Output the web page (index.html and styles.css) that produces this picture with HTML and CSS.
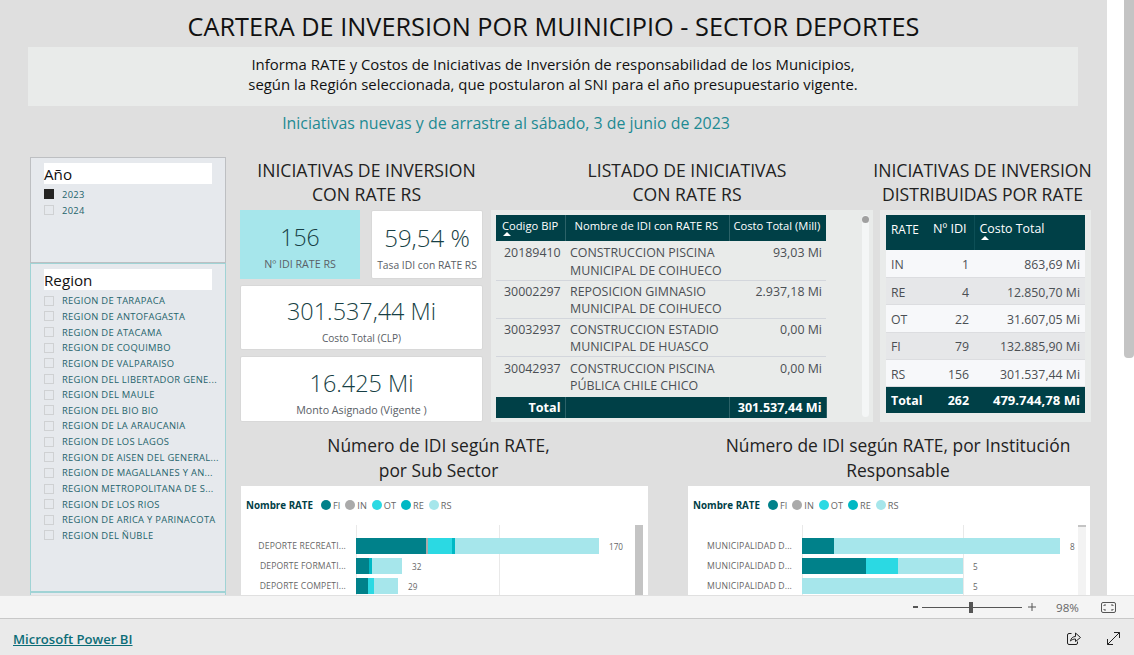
FILE: index.html
```html
<!DOCTYPE html>
<html lang="es">
<head>
    <meta charset="UTF-8">
    <title>Cartera de inversion por municipio</title>
    <link rel="stylesheet" href="styles.css">
</head>
<body>
    <div class="stage">
        <main class="canvas">
            <h1 class="page-title">CARTERA DE INVERSION POR MUINICIPIO - SECTOR DEPORTES</h1>
            <div class="info-box">
                Informa RATE y Costos de Iniciativas de Inversión de responsabilidad de los Municipios,<br>
                según la Región seleccionada, que postularon al SNI para el año presupuestario vigente.
            </div>
            <p class="subtitle">Iniciativas nuevas y de arrastre al sábado, 3 de junio de 2023</p>

            <div class="report">
                <!-- filtros -->
                <aside class="filters">
                    <section class="slicer slicer-year">
                        <h3 class="slicer-title">Año</h3>
                        <div class="slicer-item"><span class="check checked"></span>2023</div>
                        <div class="slicer-item"><span class="check"></span>2024</div>
                    </section>
                    <section class="slicer slicer-region">
                        <h3 class="slicer-title">Region</h3>
                        <div class="slicer-item"><span class="check"></span>REGION DE TARAPACA</div>
                        <div class="slicer-item"><span class="check"></span>REGION DE ANTOFAGASTA</div>
                        <div class="slicer-item"><span class="check"></span>REGION DE ATACAMA</div>
                        <div class="slicer-item"><span class="check"></span>REGION DE COQUIMBO</div>
                        <div class="slicer-item"><span class="check"></span>REGION DE VALPARAISO</div>
                        <div class="slicer-item"><span class="check"></span>REGION DEL LIBERTADOR GENE...</div>
                        <div class="slicer-item"><span class="check"></span>REGION DEL MAULE</div>
                        <div class="slicer-item"><span class="check"></span>REGION DEL BIO BIO</div>
                        <div class="slicer-item"><span class="check"></span>REGION DE LA ARAUCANIA</div>
                        <div class="slicer-item"><span class="check"></span>REGION DE LOS LAGOS</div>
                        <div class="slicer-item"><span class="check"></span>REGION DE AISEN DEL GENERAL...</div>
                        <div class="slicer-item"><span class="check"></span>REGION DE MAGALLANES Y AN...</div>
                        <div class="slicer-item"><span class="check"></span>REGION METROPOLITANA DE S...</div>
                        <div class="slicer-item"><span class="check"></span>REGION DE LOS RIOS</div>
                        <div class="slicer-item"><span class="check"></span>REGION DE ARICA Y PARINACOTA</div>
                        <div class="slicer-item"><span class="check"></span>REGION DEL ÑUBLE</div>
                    </section>
                    <section class="slicer slicer-next"></section>
                </aside>

                <div class="visuals">
                    <div class="top-row">
                        <!-- tarjetas -->
                        <section class="col-cards">
                            <h2 class="visual-title">INICIATIVAS DE INVERSION<br>CON RATE RS</h2>
                            <div class="cards">
                                <div class="card card-aqua card-small">
                                    <div class="card-value">156</div>
                                    <div class="card-label">Nº IDI RATE RS</div>
                                </div>
                                <div class="card card-small card-rate">
                                    <div class="card-value">59,54 %</div>
                                    <div class="card-label">Tasa IDI con RATE RS</div>
                                </div>
                                <div class="card card-wide card-cost">
                                    <div class="card-value">301.537,44 Mi</div>
                                    <div class="card-label">Costo Total (CLP)</div>
                                </div>
                                <div class="card card-wide card-amount">
                                    <div class="card-value">16.425 Mi</div>
                                    <div class="card-label">Monto Asignado (Vigente )</div>
                                </div>
                            </div>
                        </section>

                        <!-- listado -->
                        <section class="col-list">
                            <h2 class="visual-title">LISTADO DE INICIATIVAS<br>CON RATE RS</h2>
                            <div class="list-panel">
                                <table class="data-table list-table">
                                    <thead>
                                        <tr>
                                            <th class="col-bip">Codigo BIP<span class="sort-arrow"></span></th>
                                            <th class="col-name">Nombre de IDI con RATE RS</th>
                                            <th class="col-cost">Costo Total (Mill)</th>
                                        </tr>
                                    </thead>
                                    <tbody>
                                        <tr>
                                            <td>20189410</td>
                                            <td class="name-cell">CONSTRUCCION PISCINA MUNICIPAL DE COIHUECO</td>
                                            <td class="num">93,03 Mi</td>
                                        </tr>
                                        <tr>
                                            <td>30002297</td>
                                            <td class="name-cell">REPOSICION GIMNASIO MUNICIPAL DE COIHUECO</td>
                                            <td class="num">2.937,18 Mi</td>
                                        </tr>
                                        <tr>
                                            <td>30032937</td>
                                            <td class="name-cell">CONSTRUCCION ESTADIO MUNICIPAL DE HUASCO</td>
                                            <td class="num">0,00 Mi</td>
                                        </tr>
                                        <tr>
                                            <td>30042937</td>
                                            <td class="name-cell">CONSTRUCCION PISCINA PÚBLICA CHILE CHICO</td>
                                            <td class="num">0,00 Mi</td>
                                        </tr>
                                    </tbody>
                                    <tfoot>
                                        <tr>
                                            <td class="num">Total</td>
                                            <td></td>
                                            <td class="num">301.537,44 Mi</td>
                                        </tr>
                                    </tfoot>
                                </table>
                                <div class="list-scroll"><span class="list-thumb"></span></div>
                            </div>
                        </section>

                        <!-- distribucion -->
                        <section class="col-dist">
                            <h2 class="visual-title">INICIATIVAS DE INVERSION<br>DISTRIBUIDAS POR RATE</h2>
                            <div class="dist-panel">
                                <table class="data-table dist-table">
                                    <thead>
                                        <tr>
                                            <th class="col-rate">RATE</th>
                                            <th class="col-idi">Nº IDI</th>
                                            <th class="col-total">Costo Total<span class="sort-arrow"></span></th>
                                        </tr>
                                    </thead>
                                    <tbody>
                                        <tr><td>IN</td><td class="num">1</td><td class="num">863,69 Mi</td></tr>
                                        <tr><td>RE</td><td class="num">4</td><td class="num">12.850,70 Mi</td></tr>
                                        <tr><td>OT</td><td class="num">22</td><td class="num">31.607,05 Mi</td></tr>
                                        <tr><td>FI</td><td class="num">79</td><td class="num">132.885,90 Mi</td></tr>
                                        <tr><td>RS</td><td class="num">156</td><td class="num">301.537,44 Mi</td></tr>
                                    </tbody>
                                    <tfoot>
                                        <tr><td>Total</td><td class="num">262</td><td class="num">479.744,78 Mi</td></tr>
                                    </tfoot>
                                </table>
                            </div>
                        </section>
                    </div>

                    <div class="bottom-row">
                        <section class="col-chart chart-sector">
                            <h2 class="visual-title">Número de IDI según RATE,<br>por Sub Sector</h2>
                            <div class="chart">
                                <div class="legend">
                                    <strong>Nombre RATE</strong>
                                    <span class="legend-item"><i class="dot fi"></i>FI</span>
                                    <span class="legend-item"><i class="dot in"></i>IN</span>
                                    <span class="legend-item"><i class="dot ot"></i>OT</span>
                                    <span class="legend-item"><i class="dot re"></i>RE</span>
                                    <span class="legend-item"><i class="dot rs"></i>RS</span>
                                </div>
                                <div class="plot plot-sector">
                                    <div class="bar-row">
                                        <span class="bar-label">DEPORTE RECREATI...</span>
                                        <div class="bar">
                                            <i class="fi" style="width:70px"></i><i class="in" style="width:2px"></i><i class="ot" style="width:24px"></i><i class="re" style="width:3px"></i><i class="rs" style="width:144px"></i>
                                        </div>
                                        <span class="bar-value">170</span>
                                    </div>
                                    <div class="bar-row">
                                        <span class="bar-label">DEPORTE FORMATI...</span>
                                        <div class="bar">
                                            <i class="fi" style="width:13px"></i><i class="re" style="width:3px"></i><i class="rs" style="width:30px"></i>
                                        </div>
                                        <span class="bar-value">32</span>
                                    </div>
                                    <div class="bar-row">
                                        <span class="bar-label">DEPORTE COMPETI...</span>
                                        <div class="bar">
                                            <i class="fi" style="width:12px"></i><i class="ot" style="width:6px"></i><i class="rs" style="width:24px"></i>
                                        </div>
                                        <span class="bar-value">29</span>
                                    </div>
                                    <div class="plot-scroll thumb-full"></div>
                                </div>
                            </div>
                        </section>
                        <section class="col-chart chart-inst">
                            <h2 class="visual-title">Número de IDI según RATE, por Institución<br>Responsable</h2>
                            <div class="chart">
                                <div class="legend">
                                    <strong>Nombre RATE</strong>
                                    <span class="legend-item"><i class="dot fi"></i>FI</span>
                                    <span class="legend-item"><i class="dot in"></i>IN</span>
                                    <span class="legend-item"><i class="dot ot"></i>OT</span>
                                    <span class="legend-item"><i class="dot re"></i>RE</span>
                                    <span class="legend-item"><i class="dot rs"></i>RS</span>
                                </div>
                                <div class="plot plot-inst">
                                    <div class="bar-row">
                                        <span class="bar-label">MUNICIPALIDAD D...</span>
                                        <div class="bar">
                                            <i class="fi" style="width:32px"></i><i class="rs" style="width:226px"></i>
                                        </div>
                                        <span class="bar-value">8</span>
                                    </div>
                                    <div class="bar-row">
                                        <span class="bar-label">MUNICIPALIDAD D...</span>
                                        <div class="bar">
                                            <i class="fi" style="width:64px"></i><i class="ot" style="width:32px"></i><i class="rs" style="width:65px"></i>
                                        </div>
                                        <span class="bar-value">5</span>
                                    </div>
                                    <div class="bar-row">
                                        <span class="bar-label">MUNICIPALIDAD D...</span>
                                        <div class="bar">
                                            <i class="rs" style="width:161px"></i>
                                        </div>
                                        <span class="bar-value">5</span>
                                    </div>
                                    <div class="plot-scroll thumb-top"></div>
                                </div>
                            </div>
                        </section>
                    </div>
                </div>
            </div>
        </main>
        <div class="page-scroll"><span class="page-thumb"></span></div>
    </div>

    <!-- barra de zoom -->
    <div class="zoom-bar">
        <svg class="zoom-minus" width="5" height="2" viewBox="0 0 5 2"><rect width="5" height="2" fill="#555"/></svg>
        <span class="zoom-slider"><span class="zoom-handle"></span></span>
        <svg width="8" height="8" viewBox="0 0 8 8" fill="none" stroke="#555"><path d="M0 4H8M4 0V8"/></svg>
        <span class="zoom-value">98%</span>
        <svg class="fit-icon" width="15" height="11" viewBox="0 0 15 11" fill="none" stroke="#555">
            <rect x="0.5" y="0.5" width="14" height="10" rx="1.5"/>
            <path d="M3 4V3H5M10 3H12V4M12 7V8H10M5 8H3V7"/>
        </svg>
    </div>

    <footer class="footer">
        <a class="pbi-link" href="#">Microsoft Power BI</a>
        <div class="footer-icons">
            <svg width="14" height="13" viewBox="0 0 14 13" fill="none" stroke="#222">
                <path d="M4.5 1.5H2A1.5 1.5 0 0 0 .5 3V11A1.5 1.5 0 0 0 2 12.5H9A1.5 1.5 0 0 0 10.500 11V9.500"/>
                <path d="M3.500 9C4 6 6 4.500 8.500 4.500V1L13.500 5.500L8.500 9.500V7C6.500 7 5 7.500 3.500 9Z"/>
            </svg>
            <svg width="13" height="13" viewBox="0 0 13 13" fill="none" stroke="#222">
                <path d="M.5 12.500L12.500 .5M7 .5H12.500V6M.5 7V12.500H6"/>
            </svg>
        </div>
    </footer>
</body>
</html>
```

FILE: styles.css
```css
* {
    box-sizing: border-box;
}

html, body {
    margin: 0;
    padding: 0;
    height: 100%;
    overflow: hidden;
}

body {
    font-family: "Open Sans", "Noto Sans", Arial, sans-serif;
    color: #111;
    background-color: #eaeaea;
    display: flex;
    flex-direction: column;
}

.stage {
    display: flex;
    height: 595px;
    overflow: hidden;
    background-color: white;
}

.canvas {
    width: 1107px;
    flex-shrink: 0;
    background-color: #dfdfdf;
    padding-top: 11px;
}

.page-scroll {
    flex-grow: 1;
    padding-left: 17px;
}

.page-thumb {
    display: block;
    width: 10px;
    height: 358px;
    background-color: #c4c4c4;
    border-radius: 0 0 4px 4px;
}

/* cabecera */
.page-title {
    margin: 0;
    font-size: 25.3px;
    line-height: 30px;
    font-weight: 400;
    text-align: center;
}

.info-box {
    margin: 6px 29px 0 28px;
    height: 59px;
    padding-top: 7px;
    background-color: #e9ebea;
    text-align: center;
    font-size: 14.9px;
    line-height: 20px;
}

.subtitle {
    margin: 7px 0 0 -95px;
    font-size: 15.9px;
    line-height: 20px;
    color: #1d8a93;
    text-align: center;
}

.report {
    display: flex;
    margin: 24px 0 0 30px;
}

/* filtros */
.filters {
    width: 196px;
    flex-shrink: 0;
    margin-right: 14px;
}

.slicer {
    background-color: #e6e9ed;
    border: 1px solid #bdbfc2;
    padding: 5px 13px 0;
}

.slicer-year {
    height: 106px;
}

.slicer-year .slicer-title {
    margin-bottom: 2px;
}

.slicer-year .slicer-item {
    height: 16px;
}

.slicer-region {
    height: 329px;
    border-color: #a0d3d5;
}

.slicer-next {
    height: 20px;
    border-color: #a0d3d5;
}

.slicer-title {
    margin: 0 0 3px;
    width: 168px;
    height: 21px;
    background-color: white;
    font-size: 15.2px;
    line-height: 23px;
    font-weight: 400;
}

.slicer-item {
    display: flex;
    align-items: center;
    height: 15.65px;
    font-size: 9.4px;
    letter-spacing: 0.3px;
    color: #24636b;
    white-space: nowrap;
}

.check {
    width: 10px;
    height: 10px;
    margin-right: 8px;
    flex-shrink: 0;
    border: 1px solid #cfd1d3;
}

.check.checked {
    background-color: #252423;
    border-color: #252423;
}

/* visuales */
.visuals {
    width: 851px;
}

.top-row {
    display: flex;
}

.visual-title {
    margin: 0;
    font-size: 17.6px;
    line-height: 24px;
    font-weight: 400;
    color: #222;
    text-align: center;
}

.col-cards {
    width: 243px;
    margin-right: 8px;
}

.col-cards .visual-title {
    padding: 1px 0 0 10px;
    height: 53px;
    white-space: nowrap;
}

.cards {
    display: grid;
    grid-template-columns: 120px 112px;
    column-gap: 11px;
}

.card {
    background-color: white;
    border: 1px solid #d8d8d8;
    border-radius: 2px;
    text-align: center;
}

.card-aqua {
    background-color: #a6e6eb;
    border: none;
    border-radius: 0;
}

.card-small {
    height: 69px;
    padding-top: 11px;
}

.card-wide {
    grid-column: 1 / 3;
    margin-top: 6px;
    padding-top: 9px;
}

.card-cost {
    height: 65px;
}

.card-amount {
    height: 66px;
    padding-top: 10px;
}

.card-value {
    font-size: 23px;
    line-height: 32px;
    font-weight: 300;
    color: #173f45;
}

.card-rate .card-value {
    font-size: 24px;
}

.card-wide .card-value {
    font-size: 23.4px;
}

.card-label {
    margin-top: 4px;
    font-size: 10.7px;
    line-height: 14px;
    color: #5a6066;
    white-space: nowrap;
}

.card-rate .card-label {
    font-size: 10.3px;
}

.card-cost .card-label {
    font-size: 10.1px;
}

.col-list {
    width: 382px;
    margin-right: 7px;
}

.col-list .visual-title,
.col-dist .visual-title {
    height: 53px;
    padding-top: 1px;
    white-space: nowrap;
}

.col-list .visual-title {
    padding-left: 10px;
}

.col-dist {
    width: 211px;
}

.col-dist .visual-title {
    width: 225px;
    margin-left: -10px;
}

/* tablas */
.data-table {
    border-collapse: collapse;
    table-layout: fixed;
    color: #4b4f54;
}

.data-table th {
    background-color: #004047;
    color: white;
    font-weight: 400;
    text-align: left;
    vertical-align: top;
}

.data-table tfoot td {
    background-color: #004047;
    color: white;
    font-weight: 700;
}

.num {
    text-align: right;
}

.sort-arrow {
    display: block;
    width: 0;
    height: 0;
    border-left: 4px solid transparent;
    border-right: 4px solid transparent;
    border-bottom: 4px solid white;
    margin-top: -1px;
}

.list-panel {
    display: flex;
    align-items: flex-start;
    height: 212px;
    padding: 5px 4px 0 5px;
    background-color: #e9ebea;
}

.list-table {
    width: 330px;
    font-size: 12.4px;
}

.list-table th {
    height: 26px;
    padding: 4px 0 0 6px;
    font-size: 11.2px;
    line-height: 14px;
    border-right: 1px solid #2c6268;
    white-space: nowrap;
}

.col-bip { width: 69px; }
.col-name { width: 164px; padding-left: 9px !important; }
.col-cost { width: 97px; padding-left: 4px !important; border-right: none !important; }

.list-table th.col-bip .sort-arrow {
    margin-left: 1px;
}

.list-table tbody td {
    height: 38px;
    padding: 2px 4px 0 8px;
    line-height: 17.5px;
    vertical-align: top;
    border-bottom: 1px solid #d3d6dc;
}

.list-table tbody tr:first-child td {
    height: 39px;
    padding-top: 3px;
}

.list-table tbody tr:last-child td {
    height: 41px;
    padding-top: 3px;
    border-bottom: none;
}

.list-table tbody td.name-cell {
    padding-left: 5px;
    padding-right: 4px;
}

.list-table tfoot td {
    height: 21px;
    padding: 0 4px;
    font-size: 12.6px;
    border-right: 1px solid #2c6268;
}

.list-scroll {
    margin-left: 35px;
    width: 8px;
    height: 202px;
    background-color: #f4f6f6;
    border-radius: 4px;
}

.list-thumb {
    display: block;
    width: 7px;
    height: 7px;
    margin-top: 1px;
    border-radius: 50%;
    background-color: #a0a0a0;
}

.dist-panel {
    height: 212px;
    padding: 5px 6px 0;
    background-color: #e9ebea;
}

.dist-table {
    width: 199px;
    font-size: 12.3px;
}

.dist-table th {
    height: 35px;
    padding: 6px 4px 0 5px;
    font-size: 11.8px;
    line-height: 16px;
    vertical-align: top;
}

.col-rate { width: 44px; }
.col-idi { width: 44px; padding-left: 3px !important; font-size: 12.6px !important; white-space: nowrap; }
.col-total { width: 111px; font-size: 12.4px !important; border-left: 1px solid #0d4f56; }

.col-total .sort-arrow {
    margin-left: 1px;
}

.dist-table tbody td {
    height: 27.4px;
    padding: 2px 5px 0;
    border-bottom: 1px solid #dcdde0;
    background-color: #f7f8fa;
}

.dist-table tbody tr:nth-child(even) td {
    background-color: #e6e7e9;
}

.dist-table tfoot td {
    height: 26px;
    padding: 0 5px;
    font-size: 12.4px;
}

.dist-table tfoot td:last-child {
    font-size: 13.1px;
}

/* graficos */
.bottom-row {
    display: flex;
    margin-top: 11px;
}

.col-chart .visual-title {
    height: 53px;
    font-size: 17.4px;
    line-height: 25px;
    white-space: nowrap;
}

.chart-sector {
    width: 407px;
    margin: 0 40px 0 1px;
}

.chart-sector .visual-title {
    padding-right: 12px;
}

.chart-inst {
    width: 402px;
}

.chart-inst .visual-title {
    padding-left: 28px;
    margin-left: -22px;
    width: 436px;
}

.chart {
    height: 120px;
    background-color: white;
    padding: 11px 5px 0;
}

.legend {
    display: flex;
    align-items: center;
    height: 16px;
    font-size: 9.2px;
    color: #666;
}

.legend strong {
    color: #004047;
    font-size: 9.8px;
    margin-right: 8px;
    white-space: nowrap;
}

.legend-item {
    display: flex;
    align-items: center;
    margin-right: 5px;
}

.dot {
    display: inline-block;
    width: 10px;
    height: 10px;
    margin-right: 2px;
    border-radius: 50%;
}

.fi { background-color: #00818a; }
.in { background-color: #aaaaaa; }
.ot { background-color: #2bd9e3; }
.re { background-color: #00b8c4; }
.rs { background-color: #a6e6eb; }

.plot {
    position: relative;
    height: 70px;
    margin-top: 12px;
    padding-top: 11px;
}

.plot::before,
.plot::after {
    content: "";
    position: absolute;
    top: 0;
    bottom: 0;
    width: 1px;
    background-color: #e9e9e9;
}

.plot-sector::before { left: 110px; }
.plot-sector::after { left: 253px; }
.plot-inst::before { left: 109px; }
.plot-inst::after { left: 270px; }

.bar-row {
    position: relative;
    z-index: 1;
    display: flex;
    align-items: center;
    height: 20px;
}

.bar-label {
    width: 100px;
    margin-right: 10px;
    flex-shrink: 0;
    text-align: right;
    font-size: 8.6px;
    letter-spacing: 0.15px;
    color: #666;
    white-space: nowrap;
}

.plot-inst .bar-label {
    width: 99px;
    font-size: 8.7px;
}

.bar {
    display: flex;
    height: 16px;
}

.bar i {
    display: block;
    height: 16px;
}

.bar-value {
    margin-left: 10px;
    font-size: 8.2px;
    color: #666;
}

.plot-scroll {
    position: absolute;
    top: 0;
    width: 8px;
    height: 70px;
    z-index: 2;
}

.plot-sector .plot-scroll { left: 389px; }
.plot-inst .plot-scroll { left: 385px; }

.thumb-full {
    background-color: #c4c4c4;
}

.thumb-top {
    background-color: #f3f3f3;
    border-top: 2px solid #c4c4c4;
}

/* barra de zoom */
.zoom-bar {
    display: flex;
    align-items: center;
    justify-content: flex-end;
    height: 24px;
    padding-right: 18px;
    background-color: #f4f4f4;
    border-top: 1px solid #e0e0e0;
    border-bottom: 1px solid #c8c8c8;
    color: #555;
}

.zoom-slider {
    position: relative;
    width: 100px;
    height: 1px;
    margin: 0 6px 0 4px;
    background-color: #555;
}

.zoom-handle {
    position: absolute;
    left: 47px;
    top: -5px;
    width: 4px;
    height: 11px;
    background-color: #555;
}

.zoom-value {
    width: 22px;
    margin: 0 23px 0 20px;
    font-size: 11.6px;
    color: #666;
    white-space: nowrap;
}

/* pie */
.footer {
    display: flex;
    align-items: center;
    justify-content: space-between;
    height: 36px;
    padding: 3px 14px 0 13px;
}

.pbi-link {
    font-size: 13.1px;
    font-weight: 600;
    color: #0c6d77;
}

.footer-icons {
    display: flex;
    align-items: center;
    gap: 26px;
}
```
